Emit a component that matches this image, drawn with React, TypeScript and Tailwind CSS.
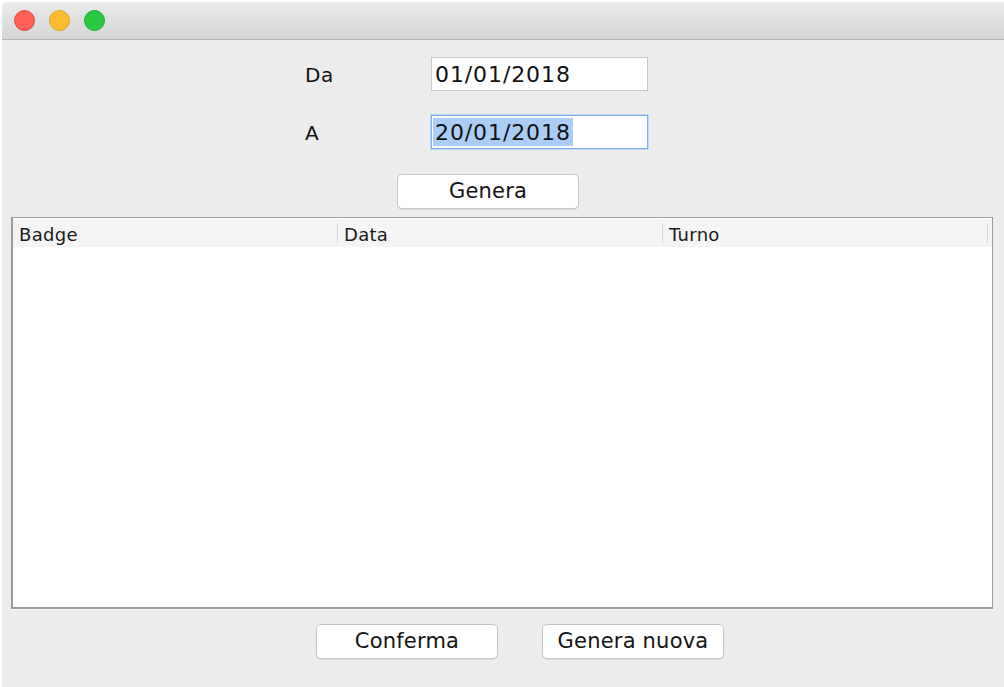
const Field = ({ value, focused }: { value: string; focused?: boolean }) => (
  <div
    className={
      focused
        ? "h-[34px] w-[217px] bg-white border border-[#7fb0ea] shadow-[0_0_0_1px_#b9d5f5] flex items-center pl-[1px]"
        : "h-[34px] w-[217px] bg-white border border-[#c9c9c9] flex items-center pl-[3px]"
    }
  >
    {focused ? (
      <span className="bg-[#a9cdf6] h-[28px] leading-[29px] px-[2px] text-[22px] tracking-[0.9px] text-[#111]">{value}</span>
    ) : (
      <span className="text-[22px] leading-[34px] pt-[1px] tracking-[0.9px] text-[#111]">{value}</span>
    )}
  </div>
);

const Btn = ({ label }: { label: string }) => (
  <button className="h-[35px] w-[182px] bg-white border border-[#c6c6c6] rounded-[5px] shadow-[0_1px_0_#d8d8d8] text-[21px] tracking-[0.2px] text-[#141414] leading-none">
    {label}
  </button>
);

export default function App() {
  const cols = ["Badge", "Data", "Turno"];
  return (
    <div className="w-[1004px] h-[687px] bg-white pt-[2px] pl-[2px] font-['DejaVu_Sans',sans-serif]">
      <div className="w-[1002px] h-[685px] bg-[#ececec] rounded-tl-[5px] overflow-hidden flex flex-col">
        {/* title bar */}
        <div className="h-[38px] shrink-0 bg-linear-to-b from-[#ebebeb] to-[#d5d5d5] border-b border-[#b6b6b6] flex items-center pl-[12px] gap-[14px]">
          <span className="w-[21px] h-[21px] rounded-full bg-[#fe5f57] border border-[#e2463f]" />
          <span className="w-[21px] h-[21px] rounded-full bg-[#febc2e] border border-[#dfa123]" />
          <span className="w-[21px] h-[21px] rounded-full bg-[#28c840] border border-[#1dad2b]" />
        </div>

        {/* form */}
        <div className="mt-[17px] ml-[303px] grid grid-cols-[126px_217px] gap-y-[24px] items-center">
          <span className="text-[20px] pt-[2px] tracking-[0.5px] text-[#111]">Da</span>
          <Field value="01/01/2018" />
          <span className="text-[20px] pt-[2px] tracking-[0.5px] text-[#111]">A</span>
          <Field value="20/01/2018" focused />
        </div>

        <div className="mt-[25px] ml-[395px]">
          <Btn label="Genera" />
        </div>

        {/* table */}
        <div className="mt-[8px] ml-[9px] w-[982px] h-[392px] bg-white border border-[#9a9a9a] border-l-2 border-b-2 shadow-[0_1px_0_#fafafa]">
          <div className="h-[28px] bg-[#f4f4f4] flex mt-[1px]">
            {cols.map((c) => (
              <div key={c} className="w-[325px] flex items-center">
                <span className="flex-1 pl-[6px] pt-[2px] text-[18px] tracking-[0.3px] text-[#1a1a1a]">{c}</span>
                <span className="w-px h-[20px] bg-[#d4d4d4]" />
              </div>
            ))}
          </div>
        </div>

        {/* bottom buttons */}
        <div className="mt-[15px] ml-[314px] flex gap-[44px]">
          <Btn label="Conferma" />
          <Btn label="Genera nuova" />
        </div>
      </div>
    </div>
  );
}
